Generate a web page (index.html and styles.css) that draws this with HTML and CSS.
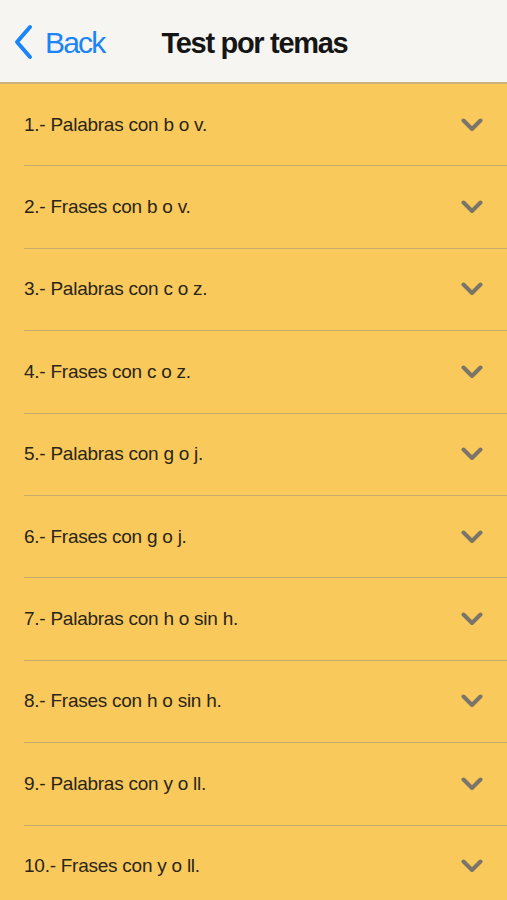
FILE: index.html
```html
<!DOCTYPE html>
<html>
<head>
<meta charset="utf-8"/>
<meta name="viewport" content="width=device-width,initial-scale=1" />
<title>Test por temas</title>
<link rel="stylesheet" href="styles.css">
</head>
<body>
    <div id="navbar">
        <a class="back" href="#">
            <svg class="back-icon" width="20" height="36" viewBox="0 0 20 36">
                <path d="M17 3 L4 18 L17 33" fill="none" stroke="#1a84f8" stroke-width="4" stroke-linecap="round" stroke-linejoin="round"/>
            </svg>
            <span>Back</span>
        </a>
        <div class="title">Test por temas</div>
    </div>
    <ul id="topics">
        <li class="topic"><span>1.- Palabras con b o v.</span><svg class="chev" viewBox="0 0 22 14"><path d="M2.5 2.5 L11 11 L19.5 2.5"/></svg></li>
        <li class="topic"><span>2.- Frases con b o v.</span><svg class="chev" viewBox="0 0 22 14"><path d="M2.5 2.5 L11 11 L19.5 2.5"/></svg></li>
        <li class="topic"><span>3.- Palabras con c o z.</span><svg class="chev" viewBox="0 0 22 14"><path d="M2.5 2.5 L11 11 L19.5 2.5"/></svg></li>
        <li class="topic"><span>4.- Frases con c o z.</span><svg class="chev" viewBox="0 0 22 14"><path d="M2.5 2.5 L11 11 L19.5 2.5"/></svg></li>
        <li class="topic"><span>5.- Palabras con g o j.</span><svg class="chev" viewBox="0 0 22 14"><path d="M2.5 2.5 L11 11 L19.5 2.5"/></svg></li>
        <li class="topic"><span>6.- Frases con g o j.</span><svg class="chev" viewBox="0 0 22 14"><path d="M2.5 2.5 L11 11 L19.5 2.5"/></svg></li>
        <li class="topic"><span>7.- Palabras con h o sin h.</span><svg class="chev" viewBox="0 0 22 14"><path d="M2.5 2.5 L11 11 L19.5 2.5"/></svg></li>
        <li class="topic"><span>8.- Frases con h o sin h.</span><svg class="chev" viewBox="0 0 22 14"><path d="M2.5 2.5 L11 11 L19.5 2.5"/></svg></li>
        <li class="topic"><span>9.- Palabras con y o ll.</span><svg class="chev" viewBox="0 0 22 14"><path d="M2.5 2.5 L11 11 L19.5 2.5"/></svg></li>
        <li class="topic"><span>10.- Frases con y o ll.</span><svg class="chev" viewBox="0 0 22 14"><path d="M2.5 2.5 L11 11 L19.5 2.5"/></svg></li>
    </ul>
</body>
</html>
```
FILE: styles.css
```css
body {
    margin: 0;
    padding: 0;
    background: #f9c95b;
    font-family: "Liberation Sans", Arial, sans-serif;
    overflow: hidden;
}
#navbar {
    height: 78px;
    padding-top: 4px;
    background: #f6f5f1;
    border-bottom: 2px solid #cbb27a;
    display: flex;
    align-items: center;
}
.back {
    display: flex;
    align-items: center;
    margin-left: 13px;
    color: #1a84f8;
    text-decoration: none;
    font-size: 30px;
    letter-spacing: -1.8px;
}
.back-icon {
    margin-right: 12px;
    margin-top: -3px;
}
.title {
    margin-left: 57px;
    font-size: 29px;
    font-weight: bold;
    letter-spacing: -1.3px;
    color: #151515;
}
#topics {
    list-style: none;
    margin: 0;
    padding: 0 0 0 24px;
}
.topic {
    height: 81.4px;
    display: flex;
    align-items: center;
    justify-content: space-between;
    padding-right: 24px;
    border-bottom: 1px solid #c9ac6c;
    font-size: 19px;
    letter-spacing: -0.25px;
    color: #2a2518;
}
.chev {
    width: 22px;
    height: 14px;
}
.chev path {
    fill: none;
    stroke: #7a7568;
    stroke-width: 4;
    stroke-linecap: round;
    stroke-linejoin: round;
}
```
